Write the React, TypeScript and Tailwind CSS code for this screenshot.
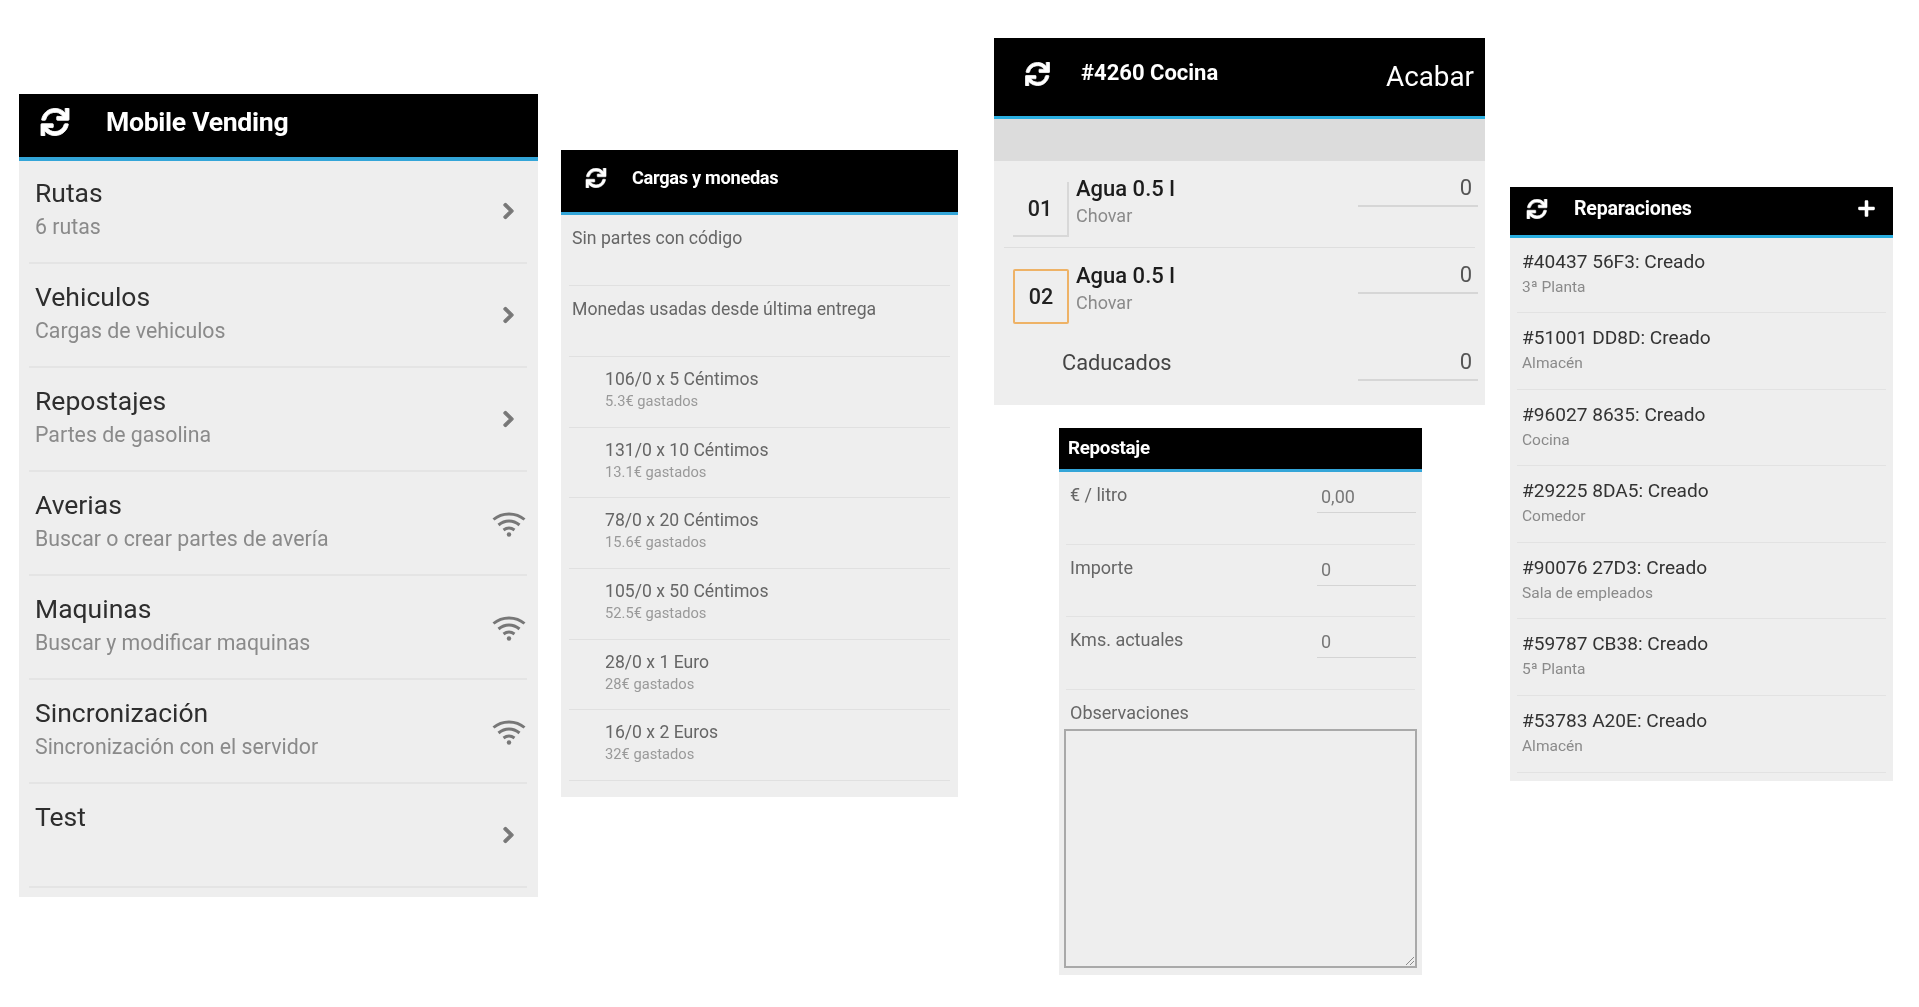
import { FaChevronRight, FaPlus, FaSync } from 'react-icons/fa';

const menu = [
  { title: 'Rutas', sub: '6 rutas', wifi: false },
  { title: 'Vehiculos', sub: 'Cargas de vehiculos', wifi: false },
  { title: 'Repostajes', sub: 'Partes de gasolina', wifi: false },
  { title: 'Averias', sub: 'Buscar o crear partes de avería', wifi: true },
  { title: 'Maquinas', sub: 'Buscar y modificar maquinas', wifi: true },
  { title: 'Sincronización', sub: 'Sincronización con el servidor', wifi: true },
  { title: 'Test', sub: '', wifi: false },
];

const coins = [
  { title: '106/0 x 5 Céntimos', sub: '5.3€ gastados' },
  { title: '131/0 x 10 Céntimos', sub: '13.1€ gastados' },
  { title: '78/0 x 20 Céntimos', sub: '15.6€ gastados' },
  { title: '105/0 x 50 Céntimos', sub: '52.5€ gastados' },
  { title: '28/0 x 1 Euro', sub: '28€ gastados' },
  { title: '16/0 x 2 Euros', sub: '32€ gastados' },
];

const repairs = [
  { title: '#40437 56F3: Creado', sub: '3ª Planta' },
  { title: '#51001 DD8D: Creado', sub: 'Almacén' },
  { title: '#96027 8635: Creado', sub: 'Cocina' },
  { title: '#29225 8DA5: Creado', sub: 'Comedor' },
  { title: '#90076 27D3: Creado', sub: 'Sala de empleados' },
  { title: '#59787 CB38: Creado', sub: '5ª Planta' },
  { title: '#53783 A20E: Creado', sub: 'Almacén' },
];

const fuel = [
  { label: '€ / litro', value: '0,00' },
  { label: 'Importe', value: '0' },
  { label: 'Kms. actuales', value: '0' },
];

function Wifi() {
  return (
    <svg className="mr-px text-[#777]" width="34" height="27" viewBox="0 0 34 27" fill="none" stroke="currentColor" strokeWidth="3">
      <path d="M1.5 9.5C10 2 24 2 32.5 9.5" />
      <path d="M6.5 15C13 9.5 21 9.5 27.5 15" />
      <path d="M11.5 20C15 17.5 19 17.5 22.5 20" />
      <circle cx="17" cy="24.5" r="2.2" fill="currentColor" stroke="none" />
    </svg>
  );
}

function MainMenu() {
  return (
    <div className="mt-[94px] w-[519px] h-[803px] bg-[#eeeeee]">
      <div className="h-[67px] pb-[8px] bg-black border-b-[4px] border-[#33a5d8] flex items-center text-white">
        <FaSync className="ml-[21px] w-[30px] h-[28px]" stroke="currentColor" strokeWidth={16} />
        <span className="ml-[36px] text-[26.6px] font-bold tracking-[-0.3px]">Mobile Vending</span>
      </div>
      <div className="ml-[10px] mr-[11px] -mt-[1px]">
        {menu.map((item) => (
          <div key={item.title} className="h-[104px] border-b-2 border-[#e4e4e4] flex items-center">
            <div className="flex-1 pl-[6px] self-start pt-[15px]">
              <p className="text-[26.5px] leading-[36px] text-[#2e2e2e]">{item.title}</p>
              <p className="text-[21.3px] leading-[31px] text-[#8a8a8a]">{item.sub}</p>
            </div>
            {item.wifi ? (
              <Wifi />
            ) : (
              <FaChevronRight className="w-[13px] h-[18px] mr-[12px] text-[#777]" stroke="currentColor" strokeWidth={30} />
            )}
          </div>
        ))}
      </div>
    </div>
  );
}

function Coins() {
  return (
    <div className="mt-[150px] w-[397px] h-[647px] bg-[#eeeeee]">
      <div className="h-[65px] pb-[6px] bg-black border-b-[3px] border-[#33a5d8] flex items-center text-white">
        <FaSync className="ml-[24px] w-[22px] h-[20px]" stroke="currentColor" strokeWidth={16} />
        <span className="ml-[25px] text-[18.2px] font-bold tracking-[-0.3px]">Cargas y monedas</span>
      </div>
      <div className="mx-[8px]">
        <div className="h-[71px] border-b border-[#e0e0e0] pl-[3px] pt-[10px] text-[17.65px] leading-[27px] text-[#666]">Sin partes con código</div>
        <div className="h-[71px] border-b border-[#e0e0e0] pl-[3px] pt-[10px] text-[17.65px] leading-[27px] text-[#666]">Monedas usadas desde última entrega</div>
        {coins.map((c) => (
          <div key={c.title} className="h-[70.7px] border-b border-[#e0e0e0] pl-[36px] pt-[9px]">
            <p className="text-[17.6px] leading-[27px] text-[#666]">{c.title}</p>
            <p className="text-[14.7px] leading-[17px] text-[#999]">{c.sub}</p>
          </div>
        ))}
      </div>
    </div>
  );
}

function Slot({ code, selected }: { code: string; selected?: boolean }) {
  return (
    <div className={`w-[56px] h-[55px] flex items-center justify-center pt-[1px] text-[21.5px] font-medium text-[#222] ${selected ? 'border-2 border-[#eeb266] rounded-[2px]' : 'border-r-2 border-b-2 border-[#d8d8d8]'}`}>
      {code}
    </div>
  );
}

function Amount() {
  return (
    <div className="ml-auto mr-[-3px] w-[120px] h-[35px] -mt-[10px] border-b-2 border-[#d6d6d6] text-right pr-[6px] text-[22px] leading-[32px] text-[#555]">0</div>
  );
}

function Product() {
  return (
    <>
      <div className="ml-[7px] -mt-[9px]">
        <p className="text-[22px] leading-[32px] font-medium text-[#1c1c1c]">Agua 0.5 l</p>
        <p className="text-[18px] leading-[26px] text-[#8a8a8a] mt-[-2px]">Chovar</p>
      </div>
      <Amount />
    </>
  );
}

function Delivery() {
  return (
    <div className="w-[491px] h-[367px] bg-[#eeeeee]">
      <div className="h-[81px] bg-black border-b-[3px] border-[#29aee0] flex text-white">
        <FaSync className="ml-[30px] mt-[24px] w-[27px] h-[24px]" stroke="currentColor" strokeWidth={16} />
        <span className="ml-[30px] mt-[19px] text-[22px] leading-[32px] font-bold">#4260 Cocina</span>
        <span className="ml-auto mr-[11px] mt-[21px] text-[27.8px] leading-[36px]">Acabar</span>
      </div>
      <div className="h-[42px] bg-[#dcdcdc]" />
      <div className="mx-[10px] h-[87px] border-b border-[#dedede] flex pl-[9px] pt-[21px]">
        <Slot code="01" />
        <Product />
      </div>
      <div className="mx-[10px] h-[87px] flex pl-[9px] pt-[21px]">
        <Slot code="02" selected />
        <Product />
      </div>
      <div className="mx-[10px] h-[60px] flex pt-[21px]">
        <span className="ml-[58px] -mt-[9px] text-[21.8px] leading-[32px] text-[#444]">Caducados</span>
        <Amount />
      </div>
    </div>
  );
}

function Refuel() {
  return (
    <div className="mt-[23px] ml-[65px] w-[363px] h-[547px] bg-[#eeeeee]">
      <div className="h-[44px] bg-black border-b-[3px] border-[#33a5d8] flex items-center text-white">
        <span className="ml-[9px] text-[18.8px] font-bold tracking-[-0.3px]">Repostaje</span>
      </div>
      <div className="mx-[7px]">
        {fuel.map((f) => (
          <div key={f.label} className="h-[72.7px] border-b border-[#e2e2e2] flex">
            <span className="ml-[4px] mt-[10px] text-[18px] leading-[26px] text-[#666]">{f.label}</span>
            <span className="ml-auto mt-[12px] h-[29px] w-[99px] border-b border-[#d4d4d4] -mr-[1px] pl-[4px] text-[18px] leading-[26px] text-[#777]">{f.value}</span>
          </div>
        ))}
        <p className="ml-[4px] mt-[10px] text-[18px] leading-[26px] text-[#666]">Observaciones</p>
      </div>
      <div className="relative mx-[5px] mt-[3px] h-[239px] border-2 border-[#a9a9a9]">
        <svg className="absolute right-0 bottom-0" width="12" height="12" viewBox="0 0 12 12">
          <path d="M11 3 3 11M11 7 7 11" stroke="#8a8a8a" strokeWidth="1" />
        </svg>
      </div>
    </div>
  );
}

function Repairs() {
  return (
    <div className="mt-[187px] w-[383px] h-[594px] bg-[#eeeeee]">
      <div className="h-[51px] pb-[5px] bg-black border-b-[3px] border-[#29aee0] flex items-center text-white">
        <FaSync className="ml-[16px] w-[22px] h-[20px]" stroke="currentColor" strokeWidth={16} />
        <span className="ml-[26px] text-[19.6px] font-bold tracking-[-0.2px]">Reparaciones</span>
        <FaPlus className="ml-auto mr-[17px] w-[19px] h-[19px]" />
      </div>
      <div className="mx-[7px] -mt-[1.5px]">
        {repairs.map((r) => (
          <div key={r.title} className="h-[76.6px] border-b border-[#e2e2e2] pl-[5px] pt-[12px]">
            <p className="text-[19.1px] leading-[26px] text-[#333]">{r.title}</p>
            <p className="text-[15.5px] leading-[24px] text-[#8a8a8a]">{r.sub}</p>
          </div>
        ))}
      </div>
    </div>
  );
}

export default function App() {
  return (
    <div className="w-[1919px] h-[1007px] bg-white flex items-start pl-[19px] font-['Roboto',sans-serif] overflow-hidden blur-[0.4px]">
      <MainMenu />
      <div className="ml-[23px]">
        <Coins />
      </div>
      <div className="ml-[36px] mt-[38px]">
        <Delivery />
        <Refuel />
      </div>
      <div className="ml-[25px]">
        <Repairs />
      </div>
    </div>
  );
}
